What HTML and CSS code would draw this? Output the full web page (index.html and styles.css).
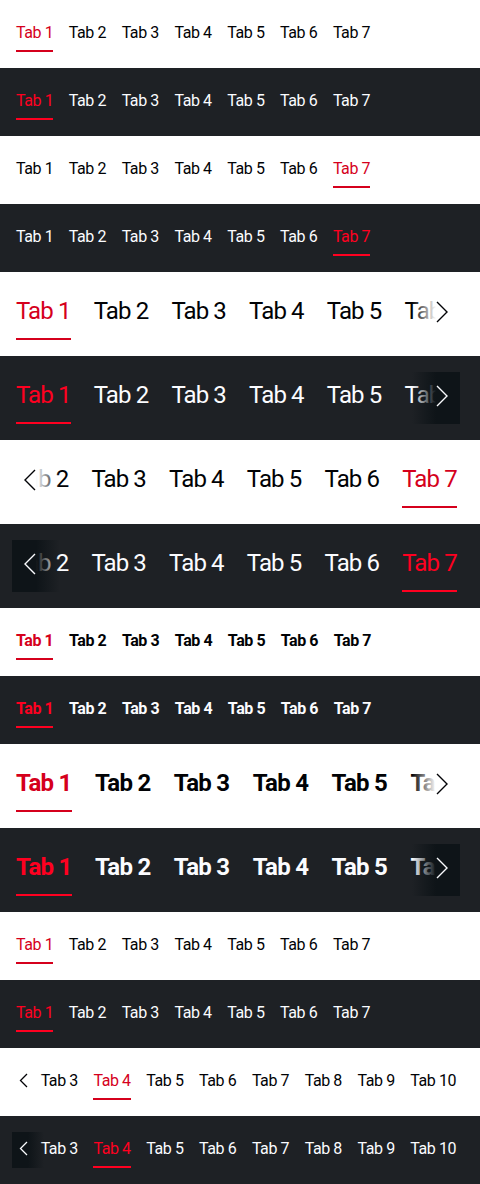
FILE: index.html
```html
<!DOCTYPE html>
<html lang="en">
<head>
<meta charset="utf-8">
<title>Tabs bar</title>
<link rel="stylesheet" href="styles.css">
</head>
<body>
<div class="row light"><div class="bar sm"><div class="scroller"><button class="tab active">Tab 1</button><button class="tab">Tab 2</button><button class="tab">Tab 3</button><button class="tab">Tab 4</button><button class="tab">Tab 5</button><button class="tab">Tab 6</button><button class="tab">Tab 7</button></div></div></div>
<div class="row dark"><div class="bar sm"><div class="scroller"><button class="tab active">Tab 1</button><button class="tab">Tab 2</button><button class="tab">Tab 3</button><button class="tab">Tab 4</button><button class="tab">Tab 5</button><button class="tab">Tab 6</button><button class="tab">Tab 7</button></div></div></div>
<div class="row light"><div class="bar sm"><div class="scroller"><button class="tab">Tab 1</button><button class="tab">Tab 2</button><button class="tab">Tab 3</button><button class="tab">Tab 4</button><button class="tab">Tab 5</button><button class="tab">Tab 6</button><button class="tab active">Tab 7</button></div></div></div>
<div class="row dark"><div class="bar sm"><div class="scroller"><button class="tab">Tab 1</button><button class="tab">Tab 2</button><button class="tab">Tab 3</button><button class="tab">Tab 4</button><button class="tab">Tab 5</button><button class="tab">Tab 6</button><button class="tab active">Tab 7</button></div></div></div>

<div class="row light"><div class="bar lg"><div class="scroller"><button class="tab active">Tab 1</button><button class="tab">Tab 2</button><button class="tab">Tab 3</button><button class="tab">Tab 4</button><button class="tab">Tab 5</button><button class="tab">Tab 6</button><button class="tab">Tab 7</button></div><div class="nav next"><svg class="chev" viewBox="0 0 12 22"><polyline points="1,1 11,11 1,21"/></svg></div></div></div>
<div class="row dark"><div class="bar lg"><div class="scroller"><button class="tab active">Tab 1</button><button class="tab">Tab 2</button><button class="tab">Tab 3</button><button class="tab">Tab 4</button><button class="tab">Tab 5</button><button class="tab">Tab 6</button><button class="tab">Tab 7</button></div><div class="nav next"><svg class="chev" viewBox="0 0 12 22"><polyline points="1,1 11,11 1,21"/></svg></div></div></div>
<div class="row light"><div class="bar lg"><div class="scroller scroll-end"><button class="tab">Tab 1</button><button class="tab">Tab 2</button><button class="tab">Tab 3</button><button class="tab">Tab 4</button><button class="tab">Tab 5</button><button class="tab">Tab 6</button><button class="tab active">Tab 7</button></div><div class="nav prev"><svg class="chev" viewBox="0 0 12 22"><polyline points="11,1 1,11 11,21"/></svg></div></div></div>
<div class="row dark"><div class="bar lg"><div class="scroller scroll-end"><button class="tab">Tab 1</button><button class="tab">Tab 2</button><button class="tab">Tab 3</button><button class="tab">Tab 4</button><button class="tab">Tab 5</button><button class="tab">Tab 6</button><button class="tab active">Tab 7</button></div><div class="nav prev"><svg class="chev" viewBox="0 0 12 22"><polyline points="11,1 1,11 11,21"/></svg></div></div></div>

<div class="row light"><div class="bar sm bold"><div class="scroller"><button class="tab active">Tab 1</button><button class="tab">Tab 2</button><button class="tab">Tab 3</button><button class="tab">Tab 4</button><button class="tab">Tab 5</button><button class="tab">Tab 6</button><button class="tab">Tab 7</button></div></div></div>
<div class="row dark"><div class="bar sm bold"><div class="scroller"><button class="tab active">Tab 1</button><button class="tab">Tab 2</button><button class="tab">Tab 3</button><button class="tab">Tab 4</button><button class="tab">Tab 5</button><button class="tab">Tab 6</button><button class="tab">Tab 7</button></div></div></div>
<div class="row light"><div class="bar lg bold"><div class="scroller"><button class="tab active">Tab 1</button><button class="tab">Tab 2</button><button class="tab">Tab 3</button><button class="tab">Tab 4</button><button class="tab">Tab 5</button><button class="tab">Tab 6</button><button class="tab">Tab 7</button></div><div class="nav next"><svg class="chev" viewBox="0 0 12 22"><polyline points="1,1 11,11 1,21"/></svg></div></div></div>
<div class="row dark"><div class="bar lg bold"><div class="scroller"><button class="tab active">Tab 1</button><button class="tab">Tab 2</button><button class="tab">Tab 3</button><button class="tab">Tab 4</button><button class="tab">Tab 5</button><button class="tab">Tab 6</button><button class="tab">Tab 7</button></div><div class="nav next"><svg class="chev" viewBox="0 0 12 22"><polyline points="1,1 11,11 1,21"/></svg></div></div></div>

<div class="row light"><div class="bar sm"><div class="scroller"><button class="tab active">Tab 1</button><button class="tab">Tab 2</button><button class="tab">Tab 3</button><button class="tab">Tab 4</button><button class="tab">Tab 5</button><button class="tab">Tab 6</button><button class="tab">Tab 7</button></div></div></div>
<div class="row dark"><div class="bar sm"><div class="scroller"><button class="tab active">Tab 1</button><button class="tab">Tab 2</button><button class="tab">Tab 3</button><button class="tab">Tab 4</button><button class="tab">Tab 5</button><button class="tab">Tab 6</button><button class="tab">Tab 7</button></div></div></div>
<div class="row light"><div class="bar sm"><div class="scroller scroll-end"><button class="tab">Tab 1</button><button class="tab">Tab 2</button><button class="tab">Tab 3</button><button class="tab active">Tab 4</button><button class="tab">Tab 5</button><button class="tab">Tab 6</button><button class="tab">Tab 7</button><button class="tab">Tab 8</button><button class="tab">Tab 9</button><button class="tab">Tab 10</button></div><div class="nav prev"><svg class="chev" viewBox="0 0 9 15"><polyline points="8,1 1.5,7.5 8,14"/></svg></div></div></div>
<div class="row dark"><div class="bar sm"><div class="scroller scroll-end"><button class="tab">Tab 1</button><button class="tab">Tab 2</button><button class="tab">Tab 3</button><button class="tab active">Tab 4</button><button class="tab">Tab 5</button><button class="tab">Tab 6</button><button class="tab">Tab 7</button><button class="tab">Tab 8</button><button class="tab">Tab 9</button><button class="tab">Tab 10</button></div><div class="nav prev"><svg class="chev" viewBox="0 0 9 15"><polyline points="8,1 1.5,7.5 8,14"/></svg></div></div></div>
<script src="script.js"></script>
</body>
</html>
```

FILE: styles.css
```css
* { box-sizing: border-box; }
html, body { margin: 0; padding: 0; }
body {
  width: 480px;
  font-family: Roboto, "Liberation Sans", sans-serif;
  background: #fff;
}
.row {
  padding: 16px 20px 16px 12px;
}
.row.light {
  background: #ffffff;
  color: #010205;
  --nav: #ffffff;
  --active: #d5001c;
}
.row.dark {
  background: #1e2125;
  color: #fbfcff;
  --nav: #0e1418;
  --active: #ff0020;
}
.bar {
  position: relative;
  overflow: hidden;
}
.scroller {
  display: flex;
  padding: 0 4px;
  overflow-x: auto;
  scrollbar-width: none;
}
.scroller::-webkit-scrollbar { display: none; }
.tab {
  flex: 0 0 auto;
  appearance: none;
  background: none;
  border: 0;
  border-bottom: 2px solid transparent;
  margin: 0;
  font-family: inherit;
  color: inherit;
  white-space: nowrap;
  cursor: pointer;
}
.tab.active {
  color: var(--active);
  border-bottom-color: var(--active);
}
.sm .scroller { gap: 16px; }
.sm .tab {
  font-size: 16px;
  line-height: 24px;
  letter-spacing: -0.42px;
  padding: 5px 0 5px;
  margin-right: -0.42px;
}
.lg .scroller { gap: 24px; }
.lg .tab {
  font-size: 24px;
  line-height: 36px;
  letter-spacing: -0.88px;
  padding: 5px 0 9px;
  margin-right: -0.88px;
}
.bold .tab { font-weight: 700; }
.sm.bold .tab { letter-spacing: -0.42px; margin-right: -0.42px; }
.lg.bold .tab { letter-spacing: -0.72px; margin-right: -0.72px; }
.nav {
  position: absolute;
  top: 0;
  bottom: 0;
  display: flex;
  align-items: center;
  padding-bottom: 4px;
}
.nav.next {
  right: 0;
  width: 48px;
  justify-content: flex-end;
  padding-right: 12px;
  background: linear-gradient(to right, transparent 0%, var(--nav) 50%);
}
.nav.prev {
  left: 0;
  width: 48px;
  padding-left: 12px;
  background: linear-gradient(to right, var(--nav) 50%, transparent 100%);
}
.sm .nav.prev {
  width: 32px;
  padding-left: 7px;
}
.chev {
  width: 12px;
  height: 22px;
  fill: none;
  stroke: currentColor;
  stroke-width: 1.4;
}
.sm .chev {
  width: 9px;
  height: 15px;
  stroke-width: 1.3;
}
```

FILE: script.js
```js
document.querySelectorAll('.scroll-end').forEach(function (el) {
  el.scrollLeft = el.scrollWidth;
});
```
